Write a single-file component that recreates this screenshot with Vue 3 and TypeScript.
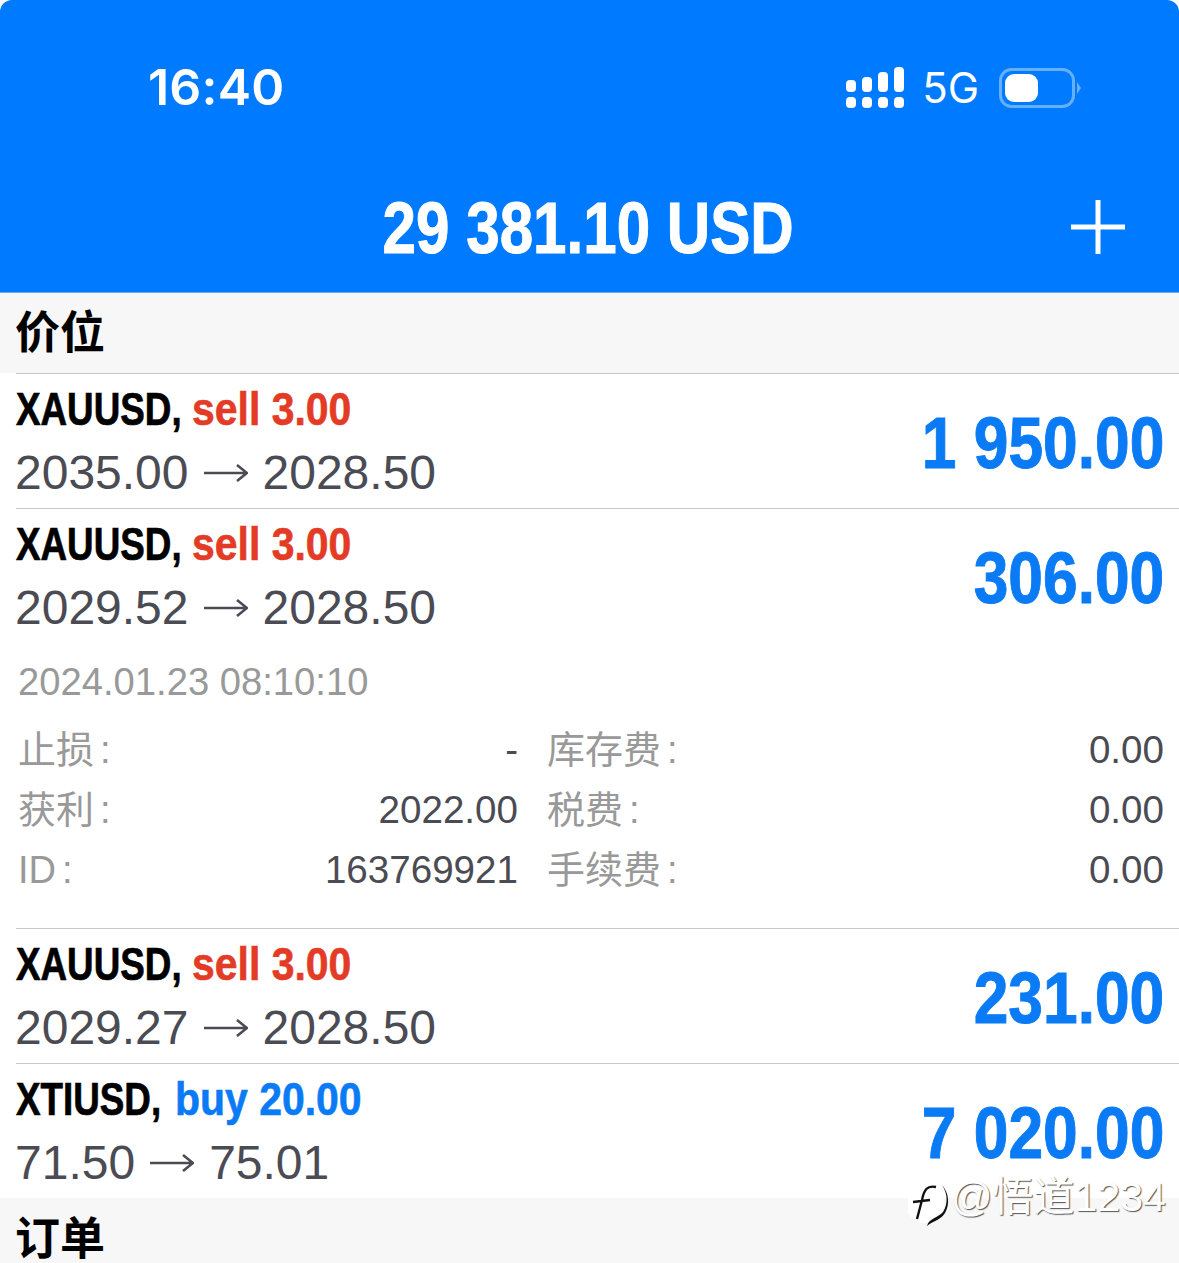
<script setup lang="ts">
interface Pos { sym: string; symWidth: number; side: 'sell' | 'buy'; vol: string; from: string; to: string; profit: string }
const top: Pos[] = [
  { sym: 'XAUUSD,', symWidth: 176, side: 'sell', vol: '3.00', from: '2035.00', to: '2028.50', profit: '1 950.00' },
  { sym: 'XAUUSD,', symWidth: 176, side: 'sell', vol: '3.00', from: '2029.52', to: '2028.50', profit: '306.00' },
]
const rest: Pos[] = [
  { sym: 'XAUUSD,', symWidth: 176, side: 'sell', vol: '3.00', from: '2029.27', to: '2028.50', profit: '231.00' },
  { sym: 'XTIUSD,', symWidth: 159, side: 'buy', vol: '20.00', from: '71.50', to: '75.01', profit: '7 020.00' },
]
const details = [
  ['止损', '-', '库存费', '0.00'],
  ['获利', '2022.00', '税费', '0.00'],
  ['ID', '163769921', '手续费', '0.00'],
]
</script>

<template>
  <div class="screen">
    <header class="head">
      <div class="status">
        <span class="clock">16:40</span>
        <div class="indicators">
          <svg class="signal" width="59" height="42" viewBox="0 0 59 42" fill="#fff">
            <rect x="0" y="13" width="10" height="12" rx="4" />
            <rect x="16" y="10" width="10" height="15" rx="4" />
            <rect x="32" y="5" width="10" height="20" rx="4" />
            <rect x="48" y="0" width="10" height="25" rx="4" />
            <rect x="0" y="30" width="10" height="11" rx="4" />
            <rect x="16" y="30" width="10" height="11" rx="4" />
            <rect x="32" y="30" width="10" height="11" rx="4" />
            <rect x="48" y="30" width="10" height="11" rx="4" />
          </svg>
          <span class="net">5G</span>
          <svg class="battery" width="83" height="40" viewBox="0 0 83 40">
            <rect x="1.5" y="1.5" width="73" height="37" rx="11" fill="none" stroke="#66afff" stroke-width="3" />
            <rect x="6" y="6" width="33" height="28" rx="9" fill="#fff" />
            <path d="M78 14 L82 20 L78 26 Z" fill="#66afff" />
          </svg>
        </div>
      </div>
      <div class="balance-row">
        <span class="balance">29 381.10 USD</span>
        <svg class="plus" width="54" height="54" viewBox="0 0 54 54" stroke="#fff" stroke-width="5">
          <path d="M0 27H54M27 0V54" />
        </svg>
      </div>
    </header>

    <div class="section">价位</div>
    <div v-for="p in top" :key="p.from" class="row">
      <div class="info">
        <div class="title">
          <span class="sym" :style="{ width: p.symWidth + 'px' }">{{ p.sym }}</span>
          <span class="side" :class="p.side">{{ p.side }} {{ p.vol }}</span>
        </div>
        <div class="prices">
          <span>{{ p.from }}</span>
          <svg class="arrow" width="44" height="20" viewBox="0 0 44 20" fill="none" stroke="#4b4b53" stroke-width="2.6">
            <path d="M0 10H43M33 2l10 8-10 8" />
          </svg>
          <span>{{ p.to }}</span>
        </div>
      </div>
      <div class="profit">{{ p.profit }}</div>
    </div>

    <div class="detail">
      <div class="time">2024.01.23 08:10:10</div>
      <div class="grid">
        <template v-for="d in details" :key="d[0]">
          <span class="label">{{ d[0] }}<i class="colon">:</i></span>
          <span class="value">{{ d[1] }}</span>
          <span class="label second">{{ d[2] }}<i class="colon">:</i></span>
          <span class="value">{{ d[3] }}</span>
        </template>
      </div>
    </div>

    <div v-for="p in rest" :key="p.from" class="row">
      <div class="info">
        <div class="title">
          <span class="sym" :style="{ width: p.symWidth + 'px' }">{{ p.sym }}</span>
          <span class="side" :class="p.side">{{ p.side }} {{ p.vol }}</span>
        </div>
        <div class="prices">
          <span>{{ p.from }}</span>
          <svg class="arrow" width="44" height="20" viewBox="0 0 44 20" fill="none" stroke="#4b4b53" stroke-width="2.6">
            <path d="M0 10H43M33 2l10 8-10 8" />
          </svg>
          <span>{{ p.to }}</span>
        </div>
      </div>
      <div class="profit">{{ p.profit }}</div>
    </div>

    <div class="section bottom">订单</div>
    <div class="watermark">
      <svg class="wm-logo" width="44" height="48" viewBox="0 0 44 48">
        <circle cx="17" cy="22" r="19" fill="#fff" />
        <path d="M28 5C19 3 16 8 14 18L9 37M5 20L22 18" fill="none" stroke="#111" stroke-width="2.4" />
        <path d="M34 3C40 12 40 22 35 30C30 36 21 36 19 44C25 39 33 38 37 31C42 22 41 11 34 3Z" fill="#111" />
      </svg>
      <span class="wm-text">@悟道1234</span>
    </div>
  </div>
</template>

<style>
html, body { margin: 0; background: #fff; }
</style>

<style scoped>
.screen {
  position: relative;
  width: 1179px;
  height: 1263px;
  overflow: hidden;
  background: #fff;
  font-family: "Liberation Sans", "Noto Sans CJK SC", sans-serif;
}
.head {
  height: 293px;
  background: #007aff;
  border-radius: 12px 12px 0 0;
  box-sizing: border-box;
  color: #fff;
  padding-top: 59px;
  border-bottom: 1px solid #69a9ec;
}
.status {
  display: flex;
  justify-content: space-between;
  align-items: center;
  height: 56px;
  padding: 0 97px 0 148px;
}
.clock { font: 600 50px/56px Inter, sans-serif; letter-spacing: 0.2px; }
.indicators { display: flex; align-items: center; gap: 20px; margin-top: 2px; }
.signal { margin-right: -3px; }
.net { font: 400 42px/48px Inter, sans-serif; margin-right: 0; }
.balance-row {
  position: relative;
  display: flex;
  justify-content: center;
  margin-top: 78px;
}
.balance {
  font-size: 72px;
  line-height: 70px;
  font-weight: 700;
  white-space: nowrap;
  transform: scaleX(0.835);
  -webkit-text-stroke: 1px #fff;
  position: relative;
  left: -1px;
}
.plus { position: absolute; right: 54px; top: 7px; }
.section {
  height: 80px;
  box-sizing: border-box;
  padding: 11px 15px 0;
  background: #f7f7f7;
  font: 700 45px/52px "Noto Sans CJK SC", sans-serif;
  color: #000;
}
.section.bottom { height: 65px; padding-top: 12px; }
.row {
  position: relative;
  display: flex;
  justify-content: space-between;
  align-items: center;
  height: 135px;
  box-sizing: border-box;
  margin-left: 16px;
  padding-right: 15px;
  border-top: 1px solid #c8c8c8;
}
.info { display: flex; flex-direction: column; }
.title {
  display: flex;
  height: 54px;
  font-size: 46px;
  line-height: 52px;
  font-weight: 700;
  white-space: nowrap;
}
.sym {
  display: block;
  color: #000;
  transform: scaleX(0.8);
  transform-origin: 0 0;
  -webkit-text-stroke: 0.7px #000;
}
.side {
  display: block;
  transform: scaleX(0.89);
  transform-origin: 0 0;
}
.sell { color: #e33b26; -webkit-text-stroke: 0.6px #e33b26; }
.buy { color: #0a7bf5; -webkit-text-stroke: 0.6px #0a7bf5; }
.prices {
  display: flex;
  align-items: center;
  margin-top: 9px;
  margin-left: -1px;
  font-size: 48px;
  line-height: 54px;
  color: #4b4b53;
  white-space: nowrap;
}
.arrow { margin: 0 15px 0 15px; }
.profit {
  position: relative;
  top: 2px;
  font-size: 72px;
  line-height: 70px;
  font-weight: 700;
  color: #0a7bf5;
  white-space: nowrap;
  transform: scaleX(0.865);
  transform-origin: 100% 50%;
  -webkit-text-stroke: 1px #0a7bf5;
}
.detail {
  height: 285px;
  box-sizing: border-box;
  padding: 17px 15px 0 18px;
}
.time { font-size: 38.2px; line-height: 44px; color: #999; }
.grid {
  display: grid;
  grid-template-columns: 100px 400px 545px 1fr;
  grid-auto-rows: 60px;
  margin-top: 16px;
  align-items: center;
}
.label {
  font-size: 38px;
  line-height: 60px;
  color: #999;
}
.colon { font-style: normal; margin-left: 6px; }
.label.second { padding-left: 29px; }
.value {
  font-size: 38.6px;
  line-height: 60px;
  color: #4b4b53;
  text-align: right;
}
.watermark {
  position: absolute;
  left: 908px;
  top: 1172px;
  display: flex;
  align-items: flex-start;
}
.wm-logo { margin-top: 10px; }
.wm-text {
  font: 400 41px/50px "Liberation Sans", "Noto Sans CJK SC", sans-serif;
  color: #fff;
  text-shadow: 1px 1px 1px #555;
  margin-left: -1px;
  white-space: nowrap;
}
</style>
